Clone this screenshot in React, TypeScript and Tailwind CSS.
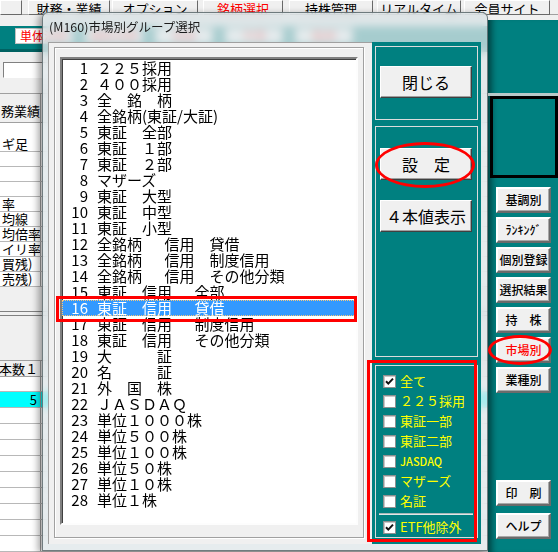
import React from 'react';

const FONT = "font-['Noto_Sans_CJK_JP','Noto_Sans',sans-serif]";

const tabs = [
  { label: '', w: 'w-[22px]', ml: 'ml-0', red: false },
  { label: '財務・業績', w: 'w-[82px]', ml: 'ml-[6px]', red: false },
  { label: 'オプション', w: 'w-[86px]', ml: 'ml-[2px]', red: false },
  { label: '銘柄選択', w: 'w-[80px]', ml: 'ml-[5px]', red: true },
  { label: '持株管理', w: 'w-[84px]', ml: 'ml-[6px]', red: false },
  { label: 'リアルタイム', w: 'w-[84px]', ml: 'ml-[4px]', red: false },
  { label: '会員サイト', w: 'w-[86px]', ml: 'ml-[3px]', red: false },
];

const markets: [number, string][] = [
  [1, '２２５採用'],
  [2, '４００採用'],
  [3, '全　銘　柄'],
  [4, '全銘柄(東証/大証)'],
  [5, '東証　全部'],
  [6, '東証　１部'],
  [7, '東証　２部'],
  [8, 'マザーズ'],
  [9, '東証　大型'],
  [10, '東証　中型'],
  [11, '東証　小型'],
  [12, '全銘柄\u2002　信用　貸借'],
  [13, '全銘柄\u2002　信用　制度信用'],
  [14, '全銘柄\u2002　信用　その他分類'],
  [15, '東証　信用\u2002　全部'],
  [16, '東証　信用\u2002　貸借'],
  [17, '東証　信用\u2002　制度信用'],
  [18, '東証　信用\u2002　その他分類'],
  [19, '大　　　証'],
  [20, '名　　　証'],
  [21, '外　国　株'],
  [22, 'ＪＡＳＤＡＱ'],
  [23, '単位１０００株'],
  [24, '単位５００株'],
  [25, '単位１００株'],
  [26, '単位５０株'],
  [27, '単位１０株'],
  [28, '単位１株'],
];

const filters = [
  { label: '全て', checked: true, small: false },
  { label: '２２５採用', checked: false, small: false },
  { label: '東証一部', checked: false, small: false },
  { label: '東証二部', checked: false, small: false },
  { label: 'JASDAQ', checked: false, small: true },
  { label: 'マザーズ', checked: false, small: false },
  { label: '名証', checked: false, small: false },
];

const sideButtons = ['基調別', 'ﾗﾝｷﾝｸﾞ', '個別登録', '選択結果', '持　株', '市場別', '業種別'];

const leftRows = ['ギ足', '', '', '', '率', '均線', '均倍率', 'イリ率', '買残)', '売残)'];

function SideButton({ label, red }: { label: string; red?: boolean }) {
  return (
    <div
      className={`w-[55px] h-[26px] bg-[#f0f0f0] border-2 border-t-white border-l-white border-r-[#6b6b6b] border-b-[#6b6b6b] shadow-[inset_-1px_-1px_0_#a8a8a8] flex items-center justify-center text-[12px] font-medium leading-none whitespace-pre ${red ? 'text-[#ff0000]' : 'text-black'}`}
    >
      {label}
    </div>
  );
}

function PanelButton({ label }: { label: string }) {
  return (
    <div className="w-[92px] h-[32px] bg-[#f0f0f0] border border-t-white border-l-white border-r-[#404040] border-b-[#404040] shadow-[inset_-1px_-1px_0_#a0a0a0] flex items-center justify-center text-[16px] leading-none whitespace-pre">
      {label}
    </div>
  );
}

function CheckBox({ checked }: { checked: boolean }) {
  return (
    <span className="w-[13px] h-[13px] shrink-0 bg-white border border-[#8e8f8f] shadow-[inset_1px_1px_0_#c8c8c8] flex items-center justify-center">
      {checked && (
        <svg width="11" height="11" viewBox="0 0 11 11">
          <path d="M2 5.2 L4.3 7.6 L9 2.6" fill="none" stroke="#111" strokeWidth="2" />
        </svg>
      )}
    </span>
  );
}

function Backdrop() {
  return (
    <div className="w-[488px] shrink-0 flex flex-col">
      <div className="h-[11px]" />
      <div className="h-[27px] bg-[#008080] border-b-[3px] border-[#006262] flex gap-[12px] pl-[15px] pt-[2px]">
        {['単体決算', '連結決算', '実績', '予想', '銘柄'].map((b) => (
          <div key={b} className="w-[58px] h-[16px] bg-white border border-[#c0c0c0] text-[12px] leading-[14px] text-[#ff0000] text-center">
            {b}
          </div>
        ))}
      </div>
      <div className="h-[42px] pt-[10px] pl-[3px]">
        <div className="w-[80px] h-[16px] bg-white border border-t-[#808080] border-l-[#808080] border-r-white border-b-white" />
      </div>
      <div className="h-[31px] flex border-y border-[#a0a0a0]">
        <div className="w-[41px] border-r border-[#a0a0a0] flex items-end justify-end pb-[3px] overflow-hidden whitespace-nowrap text-[13px] leading-[16px]">
          務業績
        </div>
      </div>
      <div className="bg-white flex flex-col">
        <div className="h-[14px] flex">
          <div className="w-[41px] border-r border-[#a0a0a0]" />
        </div>
        {leftRows.map((r, i) => (
          <div key={i} className="h-[15px] flex border-b border-[#b8b8b8]">
            <div className="w-[41px] border-r border-[#a0a0a0] pl-[2px] overflow-hidden whitespace-nowrap text-[13px] leading-[14px]">
              {r}
            </div>
          </div>
        ))}
      </div>
      <div className="h-[25px]" />
      <div className="h-[5px] border-y border-[#808080]" />
      <div className="h-[45px]" />
      <div className="h-[17px] flex border-y border-[#a0a0a0]">
        <div className="w-[41px] border-r border-[#a0a0a0] flex items-center justify-end pr-[2px] overflow-hidden whitespace-nowrap text-[13px]">
          本数１
        </div>
      </div>
      <div className="bg-white flex flex-col">
        <div className="h-[15px] flex border-b border-[#b8b8b8]">
          <div className="w-[41px] border-r border-[#a0a0a0]" />
        </div>
        <div className="h-[16px] flex bg-[#00ffff] border-b border-[#b8b8b8]">
          <div className="w-[41px] border-r border-[#a0a0a0] text-right pr-[3px] text-[13px] leading-[15px]">5</div>
        </div>
        {[0, 1, 2, 3, 4, 5, 6, 7, 8].map((i) => (
          <div key={i} className="h-[16px] flex border-b border-[#b8b8b8]">
            <div className="w-[41px] border-r border-[#a0a0a0]" />
          </div>
        ))}
      </div>
    </div>
  );
}

function SidePanel() {
  return (
    <div className="flex-1 flex flex-col">
      <div className="h-[5px]" />
      <div className="flex-1 bg-[#008080] shadow-[inset_8px_0_6px_-4px_rgba(0,0,0,0.45)] flex flex-col">
        <div className="h-[73px]" />
        <div className="h-[3px] bg-[#b9c9c9]" />
        <div className="ml-[2px] h-[82px] border-[3px] border-black" />
        <div className="mt-[9px] pl-[8px] flex flex-col gap-[4px]">
          {sideButtons.map((b) => (
            <SideButton key={b} label={b} red={b === '市場別'} />
          ))}
        </div>
        <div className="mt-[87px] pl-[8px] flex flex-col gap-[7px]">
          <SideButton label="印　刷" />
          <SideButton label="ヘルプ" />
        </div>
      </div>
    </div>
  );
}

function MarketDialog() {
  return (
    <div className="absolute left-[42px] top-[12px] w-[446px] h-[539px] rounded-t-[6px] border border-[#3e4d50]/70 bg-[#dde6e8]/75 backdrop-blur-[4px] shadow-[-4px_2px_7px_rgba(0,0,0,0.35)] flex flex-col">
      <div className="h-[29px] pl-[6px] flex items-center text-[12.5px] text-[#1c1c1c] whitespace-nowrap">
        (M160)市場別グループ選択
      </div>
      <div className="ml-[5px] w-[433px] h-[502px] flex">
        {/* list side */}
        <div className="w-[324px] h-full bg-[#f0f0f0] border-l border-t border-[#a0a0a0] pl-[5px] pt-[4px] pr-[8px] pb-[6px]">
          <div className="h-full border border-[#a0a0a0] shadow-[inset_1px_1px_0_#fff,1px_1px_0_#fff] pl-[5px] pt-[9px] pr-[5px] pb-[12px]">
            <div className="h-full bg-white border-2 border-t-[#808080] border-l-[#808080] border-r-[#fdfdfd] border-b-[#fdfdfd] shadow-[inset_1px_1px_0_#404040] pt-[1px] overflow-hidden">
              {markets.map(([n, label]) => {
                const sel = n === 16;
                return (
                  <div
                    key={n}
                    className={`h-[16px] flex items-center text-[15px] leading-[16px] whitespace-pre ${sel ? 'bg-[#3399ff] text-white outline outline-1 outline-dotted outline-[#f7c77a] -outline-offset-1' : 'text-black'}`}
                  >
                    <span className="w-[26px] text-right">{n}</span>
                    <span className="ml-[9px]">{label}</span>
                  </div>
                );
              })}
            </div>
          </div>
        </div>
        {/* control side */}
        <div className="w-[109px] h-full bg-[#008080] flex flex-col px-[3px]">
          <div className="mt-[4px] h-[74px] border border-[#dcdcdc] pl-[4px] pt-[19px]">
            <PanelButton label="閉じる" />
          </div>
          <div className="mt-[6px] h-[231px] border border-[#dcdcdc] pl-[4px] pt-[21px] flex flex-col gap-[20px]">
            <PanelButton label="設　定" />
            <PanelButton label="４本値表示" />
          </div>
          <div className="mt-[8px] h-[173px] border border-[#dcdcdc] pl-[7px] pt-[5px] flex flex-col">
            {filters.map((f) => (
              <div key={f.label} className="h-[20px] flex items-center gap-[4px]">
                <CheckBox checked={f.checked} />
                <span className={`text-[#ffff00] whitespace-nowrap ${f.small ? 'text-[11px] font-medium' : 'text-[13px]'}`}>
                  {f.label}
                </span>
              </div>
            ))}
            <div className="mt-[2px] mr-[4px] -ml-[4px] h-[2px] border-t border-[#a8b8b8] border-b border-b-[#e0e8e8]" />
            <div className="mt-[2px] h-[20px] flex items-center gap-[4px]">
              <CheckBox checked />
              <span className="text-[#ffff00] text-[13px] whitespace-nowrap">ETF他除外</span>
            </div>
          </div>
        </div>
      </div>
    </div>
  );
}

export default function App() {
  return (
    <div className={`relative w-[558px] h-[552px] overflow-hidden bg-[#f0f0f0] text-black ${FONT}`}>
      <div className="h-[15px] flex border-b border-[#a0a0a0]">
        {tabs.map((t, i) => (
          <div
            key={i}
            className={`${t.w} ${t.ml} h-[15px] shrink-0 border border-t-white border-l-white border-r-[#696969] border-b-[#696969] pt-[1px] text-center text-[13px] leading-[13px] whitespace-nowrap overflow-hidden ${t.red ? 'text-[#ff0000]' : 'text-black'}`}
          >
            {t.label}
          </div>
        ))}
      </div>
      <div className="flex h-[537px]">
        <Backdrop />
        <SidePanel />
      </div>

      <MarketDialog />

      {/* red annotations */}
      <div className="absolute left-[56px] top-[296px] w-[301px] h-[26px] border-[3px] border-[#ff0000]" />
      <div className="absolute left-[375px] top-[142px] w-[100px] h-[46px] border-[3px] border-[#ff0000] rounded-[50%]" />
      <div className="absolute left-[367px] top-[360px] w-[110px] h-[182px] border-[3px] border-[#ff0000]" />
      <div className="absolute left-[488px] top-[335px] w-[64px] h-[30px] border-[3px] border-[#ff0000] rounded-[50%]" />
    </div>
  );
}
